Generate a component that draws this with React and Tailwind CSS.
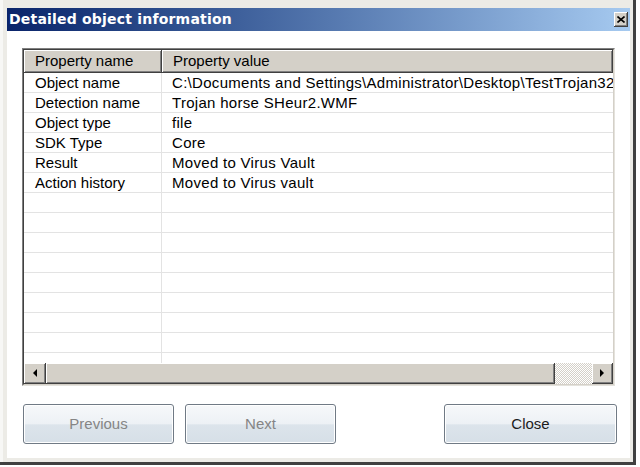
import React from "react";

const rows = [
    ["Object name", "C:\\Documents and Settings\\Administrator\\Desktop\\TestTrojan32.wmf"],
    ["Detection name", "Trojan horse SHeur2.WMF"],
    ["Object type", "file"],
    ["SDK Type", "Core"],
    ["Result", "Moved to Virus Vault"],
    ["Action history", "Moved to Virus vault"],
];

const filler = Array.from({ length: 10 }, () => ["", ""]);

const raised = "bg-[#d4d0c8] border-r border-b border-[#404040] shadow-[inset_1px_1px_0_#fff,inset_-1px_-1px_0_#808080]";

const Arrow = ({ dir }) => (
    <svg width="5" height="8" viewBox="0 0 5 8">
        {dir === "left"
            ? <path d="M5 0 L5 8 L1 4 Z" fill="#000" />
            : <path d="M0 0 L0 8 L4 4 Z" fill="#000" />}
    </svg>
);

const DialogButton = ({ label, disabled, className }) => (
    <button
        className={
            "h-[40px] rounded-[3px] border border-[#707a85] bg-[linear-gradient(to_bottom,#f6f8fa_0%,#edf1f5_50%,#dce4eb_52%,#d6dfe7_100%)] shadow-[inset_0_0_0_1px_#fff] text-[15px] " +
            (disabled ? "text-[#858585] " : "text-[#1c1c1c] ") +
            className
        }
    >
        {label}
    </button>
);

const App = () => {
    return (
        <div className="w-[640px] h-[467px] bg-white font-['Liberation_Sans',Arial,sans-serif]">
            <div className="w-[636px] h-[465px] flex flex-col bg-[#ecebe6] border-r-[3px] border-b-[3px] border-[#404040] pl-[7px] pt-[8px] pr-[3px] pb-[4px] shadow-[inset_3px_0_0_#f7f7f5]">
                {/* title bar */}
                <div className="h-[23px] flex items-center bg-linear-to-r from-[#0a246a] to-[#a6caf0] pl-[2px] pr-[2px]">
                    <span className="text-white font-bold text-[14px] font-['DejaVu_Sans',Verdana,sans-serif] tracking-[0.2px]">
                        Detailed object information
                    </span>
                    <div className={"ml-auto w-[14px] h-[15px] flex items-center justify-center " + raised}>
                        <svg width="8" height="7" viewBox="0 0 8 7">
                            <path d="M0.5 0.5 L7.5 6.5 M7.5 0.5 L0.5 6.5" stroke="#000" strokeWidth="1.6" />
                        </svg>
                    </div>
                </div>

                {/* body */}
                <div className="flex-1 bg-white px-[15px] pt-[17px] flex flex-col">
                    <div className="h-[338px] border border-t-[#808080] border-l-[#808080] border-b-[#e4e2dc] border-r-[#e4e2dc]">
                        <div className="h-full flex flex-col border border-t-[#404040] border-l-[#404040] border-b-[#d4d0c8] border-r-[#d4d0c8] bg-white overflow-hidden">
                            <div className="h-[23px] flex shrink-0 text-[15px] text-black">
                                <div className={"w-[138px] flex items-center pl-[11px] " + raised}>Property name</div>
                                <div className={"flex-1 flex items-center pl-[11px] " + raised}>Property value</div>
                            </div>
                            <div className="flex-1 overflow-hidden">
                                {[...rows, ...filler].map((r, i) => (
                                    <div key={i} className="h-[20px] flex border-b border-[#e3e3e3] text-[15px] text-black leading-[19px]">
                                        <div className="w-[138px] shrink-0 pl-[11px] border-r border-[#e3e3e3] whitespace-nowrap overflow-hidden">
                                            {r[0]}
                                        </div>
                                        <div className="flex-1 pl-[10px] whitespace-nowrap overflow-hidden tracking-[0.3px]">{r[1]}</div>
                                    </div>
                                ))}
                            </div>
                            {/* horizontal scrollbar */}
                            <div className="h-[21px] flex shrink-0">
                                <div className={"w-[22px] flex items-center justify-center " + raised}>
                                    <Arrow dir="left" />
                                </div>
                                <div className={"flex-1 " + raised}></div>
                                <div className="w-[37px] bg-[repeating-conic-gradient(#d4d0c8_0_25%,#ffffff_0_50%)] bg-[length:2px_2px]"></div>
                                <div className={"w-[21px] flex items-center justify-center " + raised}>
                                    <Arrow dir="right" />
                                </div>
                            </div>
                        </div>
                    </div>

                    <div className="mt-[18px] flex pl-[1px] mr-[-2px]">
                        <DialogButton label="Previous" disabled className="w-[151px]" />
                        <DialogButton label="Next" disabled className="w-[151px] ml-[11px]" />
                        <DialogButton label="Close" className="w-[173px] ml-auto" />
                    </div>
                </div>
            </div>
        </div>
    );
};

export default App;
